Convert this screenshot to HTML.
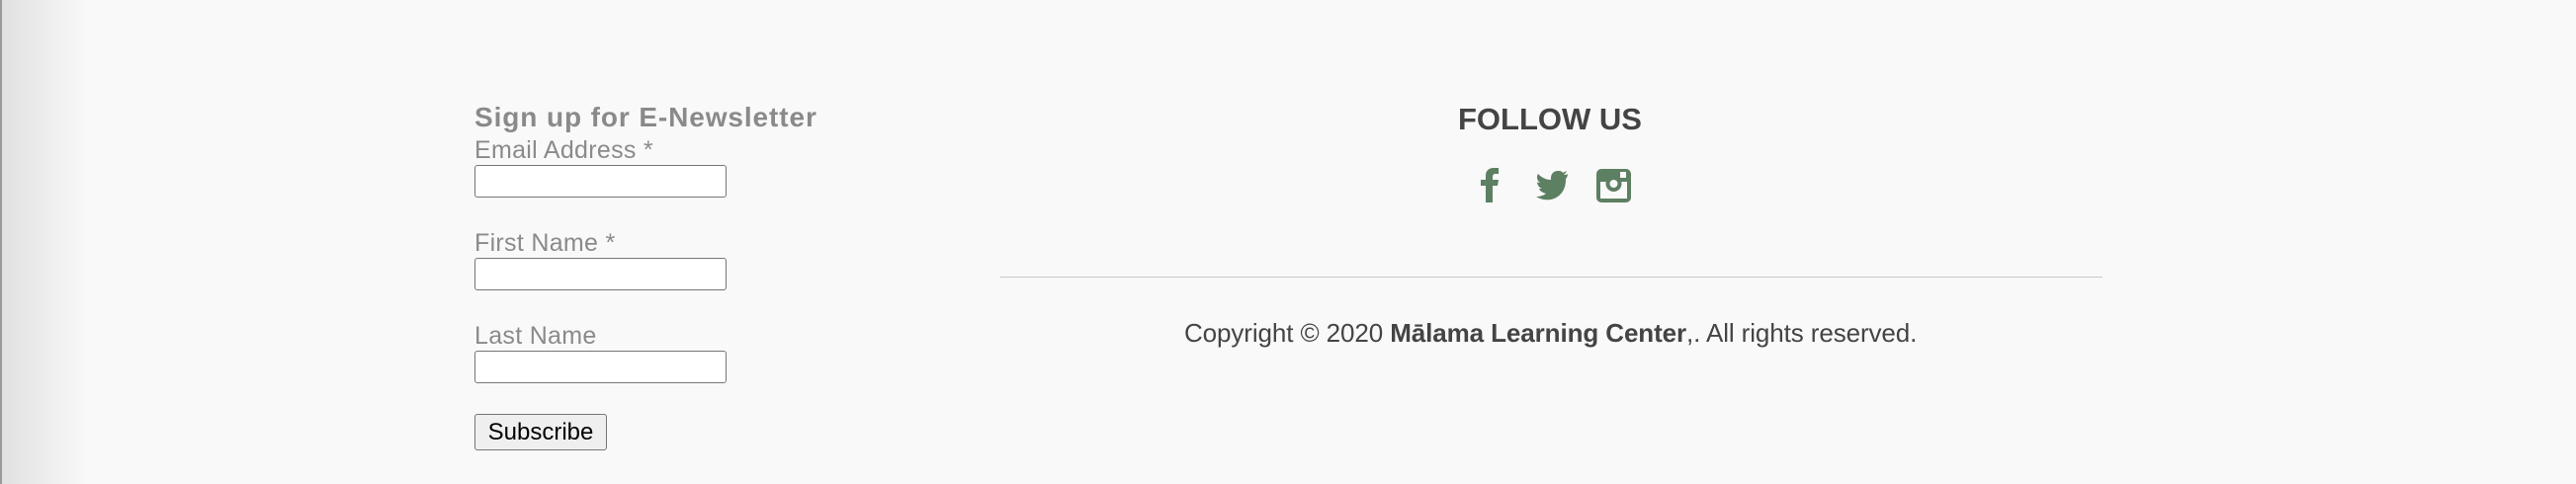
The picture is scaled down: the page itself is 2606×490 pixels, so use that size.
<!DOCTYPE html>
<html><head><style>
html,body{margin:0;padding:0}
body{width:2606px;height:490px;background:#f9f9f9;position:relative;overflow:hidden;font-family:"Liberation Sans",sans-serif}
.edge{position:absolute;left:0;top:0;width:90px;height:490px;background:linear-gradient(to right,#e0e0e0,#f9f9f9)}
.edge2{position:absolute;left:0;top:0;width:2px;height:490px;background:#9a9a9a}
.a{position:absolute;white-space:nowrap}
.h{left:480px;top:103px;font-size:28px;font-weight:bold;color:#8a8a8a;letter-spacing:0.9px}
.l{left:480px;font-size:25px;color:#8a8a8a;letter-spacing:0.3px}
.in{position:absolute;left:480px;width:253px;height:31px;background:#fff;border:1px solid #767676;border-radius:3px}
.btn{position:absolute;left:480px;top:419px;width:132px;height:35px;background:#efefef;border:1px solid #767676;border-radius:3px;font-size:24px;color:#000;text-align:center;line-height:35px}
.fu{left:1475px;top:103px;font-size:31px;font-weight:bold;color:#444}
.line{position:absolute;left:1012px;top:280px;width:1115px;height:1px;background:#c8c8c8}
.cp{left:1198px;top:322px;font-size:26px;color:#444;letter-spacing:-0.1px}
</style></head><body>
<div class="edge"></div><div class="edge2"></div>
<div class="a h">Sign up for E-Newsletter</div>
<div class="a l" style="top:138px">Email Address *</div>
<div class="in" style="top:167px"></div>
<div class="a l" style="top:232px">First Name *</div>
<div class="in" style="top:261px"></div>
<div class="a l" style="top:326px">Last Name</div>
<div class="in" style="top:355px"></div>
<div class="btn">Subscribe</div>
<div class="a fu">FOLLOW US</div>
<svg style="position:absolute;left:1497px;top:170px" width="160" height="36" viewBox="0 0 160 36">
<path fill="#5d7f62" d="M6 35V18H1v-6h5V8c0-5 3-8 8-8h5v6h-3c-2 0-3 1-3 3v3h6l-1 6h-5v17z"/>
<path fill="#5d7f62" d="M89 6c-1 1-3 1-4 1 1-1 3-3 3-4-1 1-3 1-4 2-1-2-3-2-5-2-4 0-7 3-7 7v2C66 12 62 9 59 6c-2 3-1 7 2 9-1 0-2 0-3-1 0 3 2 6 5 7h-3c1 3 4 4 7 5-3 2-6 3-10 3 13 8 30 1 30-17v-1c1-1 2-3 2-5z"/>
<rect x="118" y="1" width="35" height="34" rx="5" fill="#5d7f62"/>
<rect x="122" y="14" width="27" height="17" fill="#f9f9f9"/>
<circle cx="135.5" cy="16" r="8" fill="#5d7f62"/><circle cx="135.5" cy="16" r="4" fill="#f9f9f9"/>
<rect x="142" y="4" width="6" height="6" fill="#f9f9f9"/>
</svg>
<div class="line"></div>
<div class="a cp">Copyright © 2020 <b>Mālama Learning Center</b>,. All rights reserved.</div>
</body></html>
